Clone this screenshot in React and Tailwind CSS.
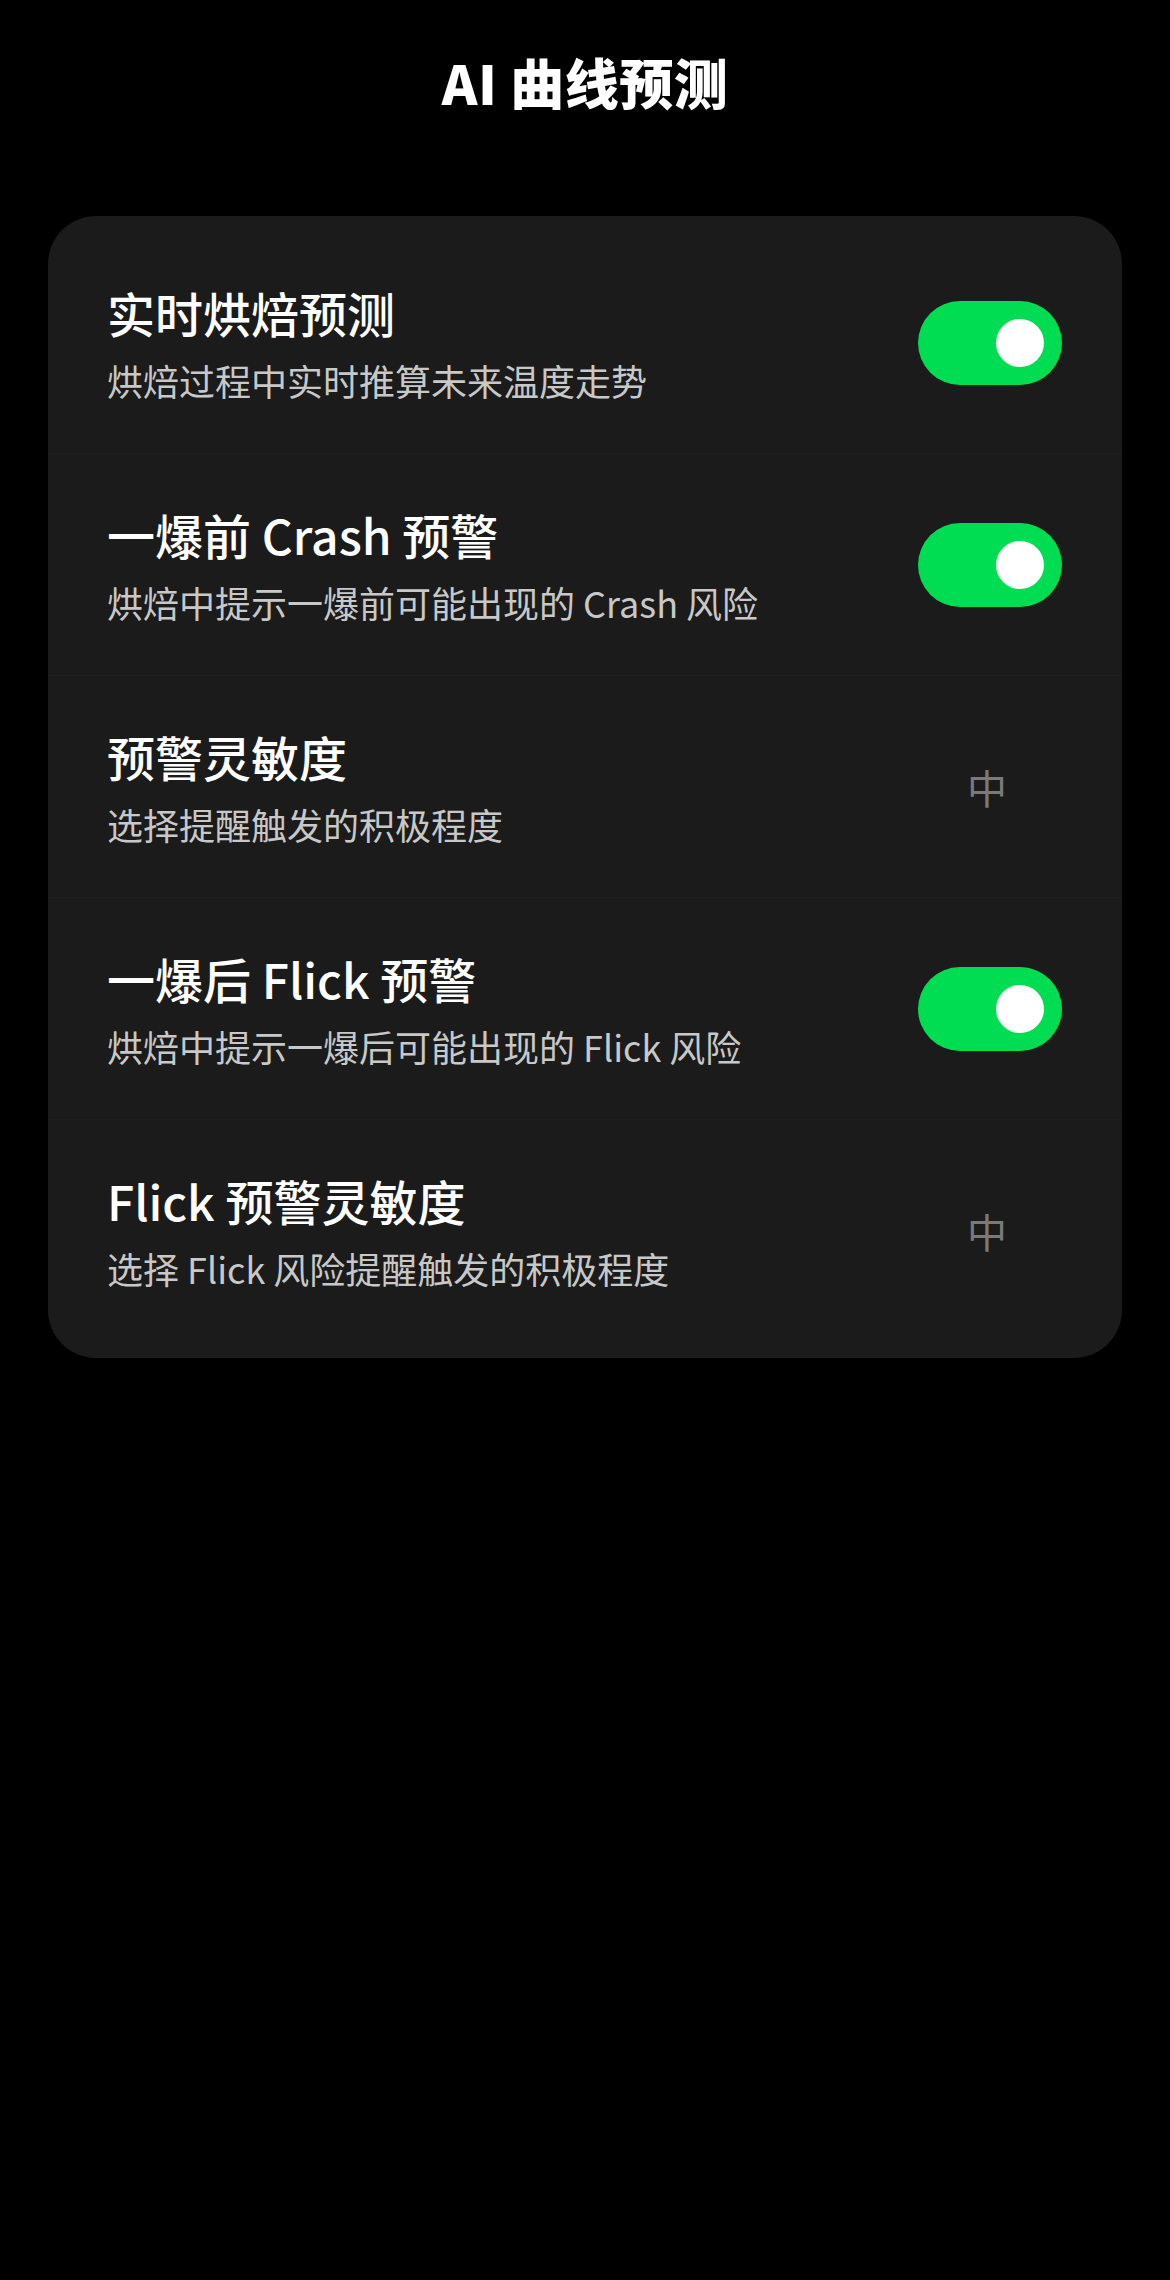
import React from "react";

const rows = [
  { title: "实时烘焙预测", sub: "烘焙过程中实时推算未来温度走势", type: "toggle" },
  { title: "一爆前 Crash 预警", sub: "烘焙中提示一爆前可能出现的 Crash 风险", type: "toggle" },
  { title: "预警灵敏度", sub: "选择提醒触发的积极程度", type: "value", value: "中" },
  { title: "一爆后 Flick 预警", sub: "烘焙中提示一爆后可能出现的 Flick 风险", type: "toggle" },
  { title: "Flick 预警灵敏度", sub: "选择 Flick 风险提醒触发的积极程度", type: "value", value: "中" },
];

function Toggle() {
  return (
    <div className="w-[144px] h-[84px] rounded-full bg-[#00dd53] flex items-center justify-end pr-[18px] shrink-0">
      <div className="w-[48px] h-[48px] rounded-full bg-white" />
    </div>
  );
}

export default function App() {
  return (
    <div
      className="min-h-[2280px] w-[1170px] bg-black"
      style={{ fontFamily: '"Noto Sans CJK SC", "Noto Sans", sans-serif' }}
    >
      <div className="pt-[52px] flex justify-center">
        <h1 className="text-[54px] leading-[60px] font-black text-white tracking-[0.5px]">AI 曲线预测</h1>
      </div>
      <div className="mt-[104px] mx-[48px] bg-[#1b1b1b] rounded-[48px] py-[16px]">
        {rows.map((r, i) => (
          <div
            key={i}
            className={
              "h-[222px] flex items-center pl-[59px] pr-[60px] " +
              (i < rows.length - 1 ? "border-b border-[#1f1f1f]" : "")
            }
          >
            <div className="flex-1 flex flex-col">
              <div className="text-[48px] leading-[60px] font-medium text-white">{r.title}</div>
              <div className="mt-[14px] text-[36px] leading-[48px] text-[#c8c8c8]">{r.sub}</div>
            </div>
            {r.type === "toggle" ? (
              <Toggle />
            ) : (
              <div className="w-[144px] pr-[6px] text-center text-[40px] leading-[48px] text-[#7a7a7a] shrink-0">
                {r.value}
              </div>
            )}
          </div>
        ))}
      </div>
    </div>
  );
}
